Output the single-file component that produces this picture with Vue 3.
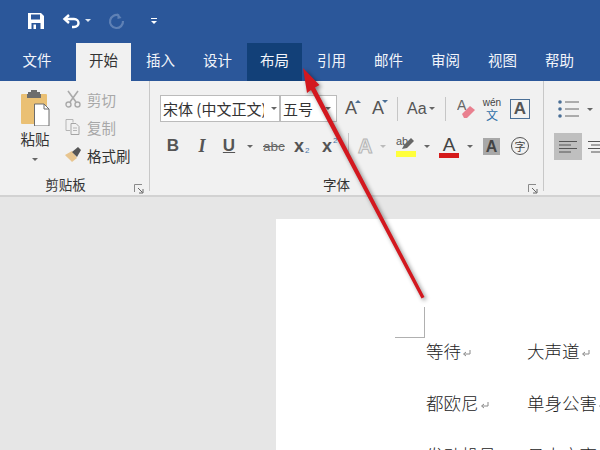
<template>
  <div class="app">
    <header class="titlebar">
      <svg class="qa-save" width="18" height="18" viewBox="0 0 18 18">
        <path d="M1 1h13l3 3v13H1z" fill="#fff" />
        <rect x="4" y="2.500" width="9" height="5" fill="#2b579a" />
        <rect x="4.500" y="11" width="9" height="6" fill="#2b579a" />
        <rect x="6.500" y="12.500" width="2.500" height="4.500" fill="#fff" />
      </svg>
      <svg class="qa-undo" width="20" height="18" viewBox="0 0 20 18">
        <path d="M7 3 2.500 7 7 11" fill="none" stroke="#fff" stroke-width="2.400" />
        <path d="M3 7h9c3 0 4.500 2 4.500 4s-1.500 4-4.500 4H10" fill="none" stroke="#fff" stroke-width="2.400" />
      </svg>
      <span class="qa-caret"></span>
      <svg class="qa-redo" width="18" height="18" viewBox="0 0 18 18">
        <path d="M11 3.500A6.500 6.500 0 1 0 15 9" fill="none" stroke="#5f81b5" stroke-width="2.200" />
        <path d="M9.500 1v6l4-1z" fill="#5f81b5" />
      </svg>
      <span class="qa-more"><i></i><b></b></span>
    </header>

    <nav class="tabs">
      <span class="tab file">文件</span>
      <span class="tab active">开始</span>
      <span class="tab">插入</span>
      <span class="tab">设计</span>
      <span class="tab hot">布局</span>
      <span class="tab">引用</span>
      <span class="tab">邮件</span>
      <span class="tab">审阅</span>
      <span class="tab">视图</span>
      <span class="tab">帮助</span>
    </nav>

    <section class="ribbon">
      <div class="group clip">
        <div class="clip-body">
          <div class="paste">
            <svg width="30" height="36" viewBox="0 0 30 36">
              <rect x="1" y="4" width="26" height="30" rx="1" fill="#eac074" />
              <path d="M8 4V2h3V0h6v2h3v2h1v4H7V4z" fill="#6d6d6d" />
              <path d="M14.500 14H24l5 5v17H14.500z" fill="#fff" stroke="#6d6d6d" />
              <path d="M24 14v5h5" fill="none" stroke="#6d6d6d" />
            </svg>
            <span class="paste-label">粘贴</span>
            <span class="caret dark"></span>
          </div>
          <div class="clip-list">
            <div class="clip-row off">
              <svg width="16" height="18" viewBox="0 0 16 18">
                <path d="M3 1l8 11M13 1 5 12" stroke="#aaa" stroke-width="1.600" fill="none" />
                <circle cx="3.500" cy="14.500" r="2.500" fill="none" stroke="#aaa" stroke-width="1.400" />
                <circle cx="12.500" cy="14.500" r="2.500" fill="none" stroke="#aaa" stroke-width="1.400" />
              </svg>
              <span>剪切</span>
            </div>
            <div class="clip-row off">
              <svg width="16" height="18" viewBox="0 0 16 18">
                <path d="M1 1.500h7v3M1 1.500v11h4" fill="none" stroke="#b5b5b5" />
                <path d="M6 5.500h5l3 3v8H6z" fill="none" stroke="#a5a5a5" />
                <path d="M8 10h4M8 12.500h4" stroke="#b5b5b5" />
              </svg>
              <span>复制</span>
            </div>
            <div class="clip-row">
              <svg width="18" height="16" viewBox="0 0 18 16">
                <path d="M1 8l7-4 5 7-5 4c-2-2-5-5-7-7z" fill="#e8c58f" />
                <path d="M8 5l6-5 3 3-4 7z" fill="#555" />
              </svg>
              <span>格式刷</span>
            </div>
          </div>
        </div>
        <div class="group-label">
          <span>剪贴板</span>
          <svg class="launcher" width="10" height="10" viewBox="0 0 10 10">
            <path d="M.5 8V.5H8" fill="none" stroke="#8a8a8a" />
            <path d="M4 4l4.500 4.500M5 9h4V5" fill="none" stroke="#666" />
          </svg>
        </div>
      </div>

      <div class="group font">
        <div class="font-body">
          <div class="row first">
            <div class="combo name"><span>宋体 (中文正文)</span><i class="caret dark"></i></div>
            <div class="combo size"><span>五号</span><i class="caret dark"></i></div>
            <span class="grow-a up">A<i></i></span>
            <span class="grow-a down">A<i></i></span>
            <span class="vsep s1"></span>
            <span class="aa">Aa</span><i class="caret aa-c"></i>
            <span class="vsep s2"></span>
            <svg class="eraser" width="19" height="22" viewBox="0 0 19 22">
              <text x="0" y="12" class="eraser-a">A</text>
              <path d="M5 16l8-8 5 4-8 8H7z" fill="#e9808f" />
            </svg>
            <span class="wen"><em>wén</em><b>文</b></span>
            <span class="boxed">A</span>
          </div>
          <div class="row second">
            <span class="fmt b">B</span>
            <span class="fmt i">I</span>
            <span class="fmt u">U</span>
            <i class="caret u-c"></i>
            <span class="strike">abc</span>
            <span class="script sub">x<small>2</small></span>
            <span class="script sup">x<small>2</small></span>
            <span class="vsep s3"></span>
            <span class="glow">A</span><i class="caret light glow-c"></i>
            <span class="hl"><em>ab</em><u></u>
              <svg class="pen" width="14" height="13" viewBox="0 0 14 13"><path d="M1 12l2-4 7-7 3 3-7 7z" fill="#666" /></svg>
            </span>
            <i class="caret hl-c"></i>
            <span class="color">A<u></u></span>
            <i class="caret col-c"></i>
            <span class="shade">A</span>
            <span class="ring">字</span>
          </div>
        </div>
        <div class="group-label">
          <span>字体</span>
          <svg class="launcher" width="10" height="10" viewBox="0 0 10 10">
            <path d="M.5 8V.5H8" fill="none" stroke="#8a8a8a" />
            <path d="M4 4l4.500 4.500M5 9h4V5" fill="none" stroke="#666" />
          </svg>
        </div>
      </div>

      <div class="group para">
        <div class="list-row">
          <svg width="21" height="20" viewBox="0 0 21 20">
            <circle cx="2" cy="3" r="1.800" fill="#4a6f96" />
            <circle cx="2" cy="10" r="1.800" fill="#4a6f96" />
            <circle cx="2" cy="17" r="1.800" fill="#4a6f96" />
            <path d="M7 3h14M7 10h14M7 17h14" stroke="#666" />
          </svg>
          <i class="caret dark"></i>
        </div>
        <div class="align-row">
          <span class="align on"><svg width="18" height="12" viewBox="0 0 18 12"><path d="M0 .5h18M0 4h12M0 7.500h18M0 11h12" stroke="#555" /></svg></span>
          <span class="align"><svg width="18" height="12" viewBox="0 0 18 12"><path d="M0 .5h18M3 4h12M0 7.500h18M3 11h12" stroke="#555" /></svg></span>
        </div>
      </div>
    </section>

    <main class="doc">
      <div class="page">
        <div class="crop"></div>
        <div class="words">
          <span v-for="w in words" :key="w" class="word">{{ w }}<svg width="9" height="9" viewBox="0 0 9 9"><path d="M8 1v4H2M4 3 1.500 5 4 7" fill="none" stroke="#8a8a8a" /></svg></span>
        </div>
      </div>
    </main>

    <svg class="arrow" width="600" height="450" viewBox="0 0 600 450">
      <path d="M303 68 319.500 85 315 87.500 424.500 297 421.500 298.500 311 90 307 93z" fill="#d3181f" />
    </svg>
  </div>
</template>

<script setup>
const words = ['等待', '大声道', '都欧尼', '单身公害', '发动机员', '日大方高']
</script>

<style>
html, body { margin: 0; background: #e6e6e6; }
</style>

<style scoped>
.app {
  position: relative;
  width: 600px;
  height: 450px;
  overflow: hidden;
  display: flex;
  flex-direction: column;
  font-family: "Noto Sans CJK SC", "Liberation Sans", sans-serif;
  color: #444;
}
i, em { font-style: normal; }

.titlebar {
  height: 41px;
  background: #2b579a;
  display: flex;
  align-items: center;
  flex: none;
}
.qa-save { margin-left: 27px; }
.qa-undo { margin-left: 17px; }
.qa-caret {
  margin-left: 3px;
  border: 3px solid transparent;
  border-top: 3px solid #dfe7f2;
  border-bottom: 0;
}
.qa-redo { margin-left: 17px; }
.qa-more { margin-left: 25px; display: flex; flex-direction: column; gap: 2px; align-items: center; }
.qa-more i { width: 6px; height: 1px; background: #fff; }
.qa-more b { border: 3px solid transparent; border-top: 3px solid #fff; border-bottom: 0; }

.tabs {
  height: 40px;
  flex: none;
  display: flex;
  background: #2b579a;
  padding: 2px 0 0 9px;
  box-sizing: border-box;
}
.tab {
  width: 57px;
  line-height: 33px;
  text-align: center;
  color: #f2f5fa;
  font-size: 14.500px;
}
.tab.file { width: 56px; }
.tab.active {
  width: 55px;
  margin-left: 11px;
  margin-right: 1px;
  background: #f1f1f1;
  color: #333;
}
.tab.hot { background: #124078; width: 55px; margin: 0 1px; }

.ribbon {
  height: 114px;
  flex: none;
  display: flex;
  background: #f1f1f1;
  border-bottom: 2px solid #d2d2d2;
}
.group { position: relative; flex: none; }
.group-label {
  position: absolute;
  left: 0;
  right: 0;
  bottom: -4px;
  height: 22px;
  line-height: 22px;
  text-align: center;
  font-size: 13.500px;
  color: #333;
}
.clip .group-label { padding-right: 18px; }
.font .group-label { padding-right: 20px; }
.launcher { position: absolute; right: 5px; bottom: 1px; }

.clip { width: 149px; border-right: 1px solid #c8c8c8; height: 110px; }
.clip-body { display: flex; padding: 9px 0 0 20px; }
.paste { display: flex; flex-direction: column; align-items: center; width: 30px; }
.paste-label { font-size: 14.500px; color: #333; line-height: 20px; margin-top: 3px; }
.paste .caret { margin-top: 9px; }
.clip-list { margin: -5px 0 0 14px; }
.clip-row {
  display: flex;
  align-items: center;
  gap: 5px;
  height: 28px;
  width: 70px;
  white-space: nowrap;
  font-size: 14.500px;
  color: #333;
}
.clip-row svg { width: 18px; flex: none; }
.clip-row.off { color: #a8a8a8; }

.caret {
  display: inline-block;
  flex: none;
  border: 3px solid transparent;
  border-top: 3px solid #666;
  border-bottom: 0;
  width: 0;
  height: 0;
}
.caret.light { border-top-color: #bbb; }

.font { width: 393px; height: 110px; border-right: 1px solid #c8c8c8; }
.font-body { padding: 14px 0 0 10px; }
.row { display: flex; align-items: center; position: relative; }
.row > * { flex: none; }
.row.first { height: 27px; }
.row.second { height: 26px; margin-top: 11px; }

.combo {
  height: 27px;
  box-sizing: border-box;
  background: #fff;
  border: 1px solid #bbb;
  display: flex;
  align-items: center;
  font-size: 15px;
  color: #333;
  overflow: hidden;
  white-space: nowrap;
}
.combo span { overflow: hidden; flex: none; }
.combo.name { width: 120px; padding-left: 2px; }
.combo.name span { width: 101px; }
.combo.name .caret { margin-left: 7px; }
.combo.size { width: 57px; padding-left: 2px; }
.combo.size span { width: 38px; }
.combo.size .caret { margin-left: 4px; }

.grow-a {
  position: relative;
  font: 18px "Liberation Sans", sans-serif;
  color: #555;
  width: 13px;
  margin-left: 8px;
}
.grow-a.down { margin-left: 14px; }
.grow-a i {
  position: absolute;
  right: -3px;
  top: 2px;
  border: 3px solid transparent;
}
.grow-a.up i { border-bottom: 3px solid #4a6f96; border-top: 0; }
.grow-a.down i { border-top: 3px solid #4a6f96; border-bottom: 0; }

.vsep { width: 1px; height: 24px; background: #c6c6c6; flex: none; }
.s1 { margin: 0 9px 0 12px; }
.s2 { margin: 0 11px 0 10px; }
.s3 { margin: 0 9px 0 11px; height: 26px; }
.aa { font: 16px "Liberation Sans", sans-serif; color: #555; width: 17px; white-space: nowrap; }
.aa-c { margin-left: 5px; }

.eraser-a { font: 14px "Liberation Sans", sans-serif; fill: #666; }
.wen {
  display: flex;
  flex-direction: column;
  align-items: center;
  width: 16px;
  margin-left: 8px;
}
.wen em { font: 10px/11px "Liberation Sans", sans-serif; color: #444; }
.wen b { font-weight: 400; font-size: 12px; line-height: 13px; color: #2f6fa8; }
.boxed {
  width: 20px;
  height: 20px;
  box-sizing: border-box;
  border: 1px solid #4a6f96;
  margin-left: 10px;
  text-align: center;
  font: bold 17px/18px "Liberation Sans", sans-serif;
  color: #555;
}

.fmt { font: bold 17px "Liberation Sans", sans-serif; color: #555; width: 14px; text-align: center; }
.fmt.b { margin-left: 6px; }
.fmt.i { margin-left: 15px; font-style: italic; font-family: "Liberation Serif", serif; font-size: 18px; }
.fmt.u { margin-left: 13px; text-decoration: underline; }
.u-c { margin-left: 11px; }
.strike {
  margin-left: 10px;
  width: 21px;
  font: 13.500px "Liberation Sans", sans-serif;
  color: #666;
  text-decoration: line-through;
}
.script { font: bold 18px "Liberation Sans", sans-serif; color: #555; width: 15px; position: relative; }
.script small { font-size: 8px; font-weight: 400; color: #4a77a8; position: absolute; left: 11px; line-height: 9px; }
.sub { margin-left: 10px; }
.sub small { bottom: 2px; }
.sup { margin-left: 13px; }
.sup small { top: 0; }

.glow {
  font: bold 20px "Liberation Sans", sans-serif;
  color: #e9e9e9;
  -webkit-text-stroke: 1px #b5b5b5;
  width: 15px;
}
.glow-c { margin-left: 7px; }
.hl { position: relative; width: 20px; height: 25px; margin-left: 10px; }
.hl em { position: absolute; left: 0; top: 1px; font: 11px/12px "Liberation Sans", sans-serif; color: #555; }
.hl u { position: absolute; left: 0; right: 0; top: 17px; height: 6px; background: #ffff3c; }
.pen { position: absolute; left: 5px; top: 3px; }
.hl-c { margin-left: 8px; }
.color {
  position: relative;
  width: 20px;
  height: 25px;
  margin-left: 9px;
  text-align: center;
  font: 19px/21px "Liberation Sans", sans-serif;
  color: #444;
}
.color u { position: absolute; left: 0; right: 0; bottom: 1px; height: 5px; background: #d51b1b; }
.col-c { margin-left: 8px; }
.shade {
  width: 17px;
  height: 17px;
  margin-left: 10px;
  background: #a8a8a8;
  text-align: center;
  font: bold 16px/17px "Liberation Sans", sans-serif;
  color: #444;
}
.ring {
  width: 16px;
  height: 16px;
  margin-left: 11px;
  border: 1px solid #555;
  border-radius: 50%;
  text-align: center;
  font-size: 11px;
  line-height: 16px;
  color: #444;
}

.para { flex: 1; position: relative; }
.list-row { display: flex; align-items: center; gap: 8px; margin: 18px 0 0 14px; }
.align-row { display: flex; margin: 14px 0 0 10px; gap: 1px; }
.align { width: 28px; height: 27px; display: flex; align-items: center; justify-content: center; flex: none; }
.align.on { background: #bfbfbf; }

.doc {
  flex: 1;
  min-height: 0;
  background: #e6e6e6;
  padding: 22px 0 0 276px;
}
.page {
  position: relative;
  height: 300px;
  background: #fff;
  padding: 119px 0 0 150px;
}
.crop {
  position: absolute;
  left: 119px;
  top: 88px;
  width: 29px;
  height: 30px;
  border: solid #b0b0b0;
  border-width: 0 1px 1px 0;
}
.words {
  display: grid;
  grid-template-columns: 101px 101px;
  row-gap: 26px;
  white-space: nowrap;
}
.word {
  height: 26px;
  line-height: 26px;
  font-size: 17.500px;
  font-weight: 300;
  color: #222;
}
.word svg { margin-left: 1px; }

.arrow {
  position: absolute;
  left: 0;
  top: 0;
  filter: drop-shadow(2px 2px 2px rgba(0, 0, 0, 0.45));
  pointer-events: none;
}
</style>
